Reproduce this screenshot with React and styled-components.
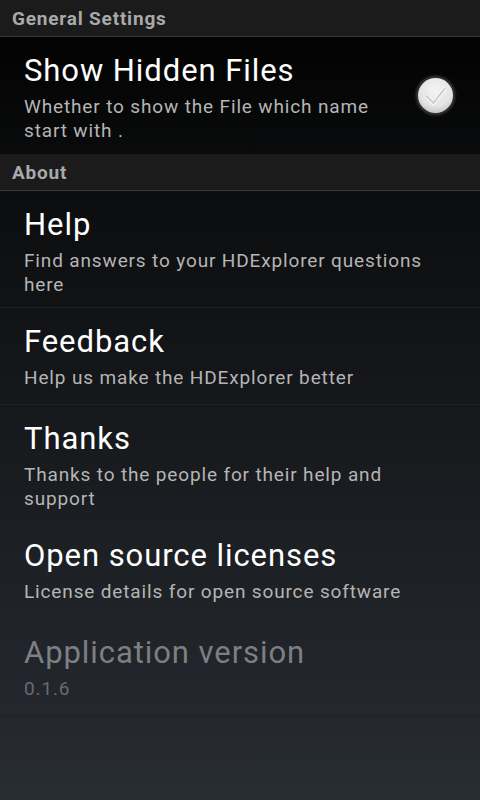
import React from 'react';
import styled, { createGlobalStyle } from 'styled-components';

const GlobalStyle = createGlobalStyle`
	html, body {
		margin: 0;
		padding: 0;
		background: #000;
	}
	body {
		font-family: Roboto, "Noto Sans", "Liberation Sans", sans-serif;
		letter-spacing: 0.05em;
	}
`;

const about = [
	{ title: 'Help', summary: 'Find answers to your HDExplorer questions here' },
	{ title: 'Feedback', summary: 'Help us make the HDExplorer better' },
	{ title: 'Thanks', summary: 'Thanks to the people for their help and support' },
	{ title: 'Open source licenses', summary: 'License details for open source software' },
	{ title: 'Application version', summary: '0.1.6', disabled: true },
];

const CheckBox = ({ checked }) => (
	<CheckFrame>
		<svg width="43" height="43" viewBox="0 0 43 43">
			<defs>
				<radialGradient id="knob" cx="50%" cy="35%" r="65%">
					<stop offset="0%" stopColor="#f4f4f4" />
					<stop offset="70%" stopColor="#e4e4e4" />
					<stop offset="100%" stopColor="#c8c8c8" />
				</radialGradient>
			</defs>
			<circle cx="21.5" cy="21.5" r="21" fill="#1c1c1c" />
			<circle cx="21.5" cy="21.5" r="20" fill="#2e2e2e" stroke="#121212" strokeWidth="1" />
			<circle cx="21.5" cy="21.5" r="17.5" fill="url(#knob)" />
			{checked && (
				<>
					<polyline
						points="12,21.5 19.5,29 31,14"
						fill="none"
						stroke="#fafafa"
						strokeWidth="4"
						strokeLinejoin="miter"
					/>
					<polyline
						points="12,21.5 19.5,29 31,14"
						fill="none"
						stroke="#cdcdcd"
						strokeWidth="2"
						strokeLinejoin="miter"
					/>
				</>
			)}
		</svg>
	</CheckFrame>
);

const Preference = ({ title, summary, disabled, widget, last }) => (
	<Row last={last}>
		<TextBlock>
			<Title disabled={disabled}>{title}</Title>
			<Summary disabled={disabled}>{summary}</Summary>
		</TextBlock>
		{widget}
	</Row>
);

const App = () => {
	return (
		<Screen>
			<GlobalStyle />
			<Category>General Settings</Category>
			<Preference
				title="Show Hidden Files"
				summary="Whether to show the File which name start with ."
				widget={<CheckBox checked />}
				last
			/>
			<Category>About</Category>
			{about.map((item) => (
				<Preference key={item.title} {...item} />
			))}
		</Screen>
	);
};

export default App;

const Screen = styled.div`
	min-height: 800px;
	width: 480px;
	background: linear-gradient(to bottom, #000000 0%, #0a0b0c 20%, #282c33 100%);
	display: flex;
	flex-direction: column;
`;

const Category = styled.div`
	height: 36px;
	line-height: 37px;
	padding-left: 12px;
	background: #1b1b1b;
	border-bottom: 1px solid #383838;
	color: #a9a9a9;
	font-size: 19px;
	font-weight: 700;
`;

const Row = styled.div`
	display: flex;
	align-items: center;
	box-sizing: border-box;
	min-height: 97px;
	padding: 0 24px;
	border-bottom: 1px solid ${(p) => (p.last ? 'transparent' : '#1f2226')};
`;

const TextBlock = styled.div`
	flex: 1;
	align-self: flex-start;
	padding: 16px 0 10px;
	min-width: 0;
`;

const Title = styled.div`
	font-size: 31px;
	line-height: 36px;
	letter-spacing: 0.03em;
	color: ${(p) => (p.disabled ? '#7d7f83' : '#ffffff')};
	margin-bottom: 6px;
	white-space: nowrap;
`;

const Summary = styled.div`
	font-size: 19px;
	line-height: 24px;
	letter-spacing: 0.045em;
	color: ${(p) => (p.disabled ? '#686b70' : '#b5b5b5')};
`;

const CheckFrame = styled.div`
	display: flex;
	width: 43px;
	height: 43px;
	margin-left: 14px;
	margin-right: -1px;
`;
